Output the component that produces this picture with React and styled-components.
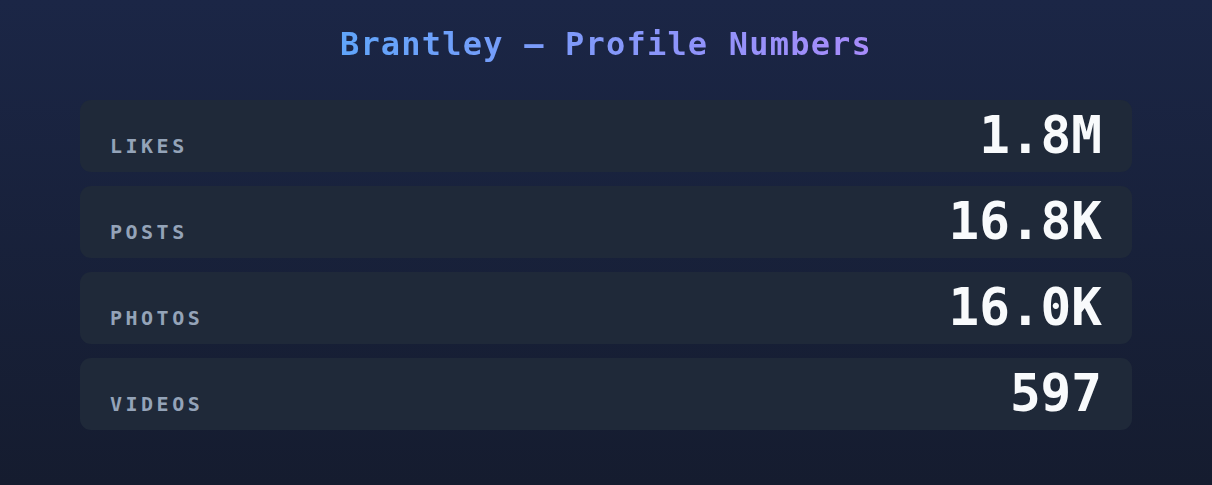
import styled, { createGlobalStyle } from "styled-components";

const GlobalStyle = createGlobalStyle`
  html, body {
    margin: 0;
    padding: 0;
    height: 100%;
  }
  body {
    background: linear-gradient(180deg, #1b2646 0%, #151c2f 100%);
    font-family: "DejaVu Sans Mono", "Liberation Mono", monospace;
    min-height: 485px;
  }
`;

const Page = styled.div`
  padding: 25px 80px;
  display: flex;
  flex-direction: column;
`;

const Title = styled.h1`
  margin: 0 0 37px;
  font-size: 32px;
  line-height: 38px;
  letter-spacing: 1.2px;
  font-weight: 700;
  text-align: center;
  background: linear-gradient(90deg, #60a5fa 0%, #a78bfa 100%);
  background-clip: text;
  -webkit-background-clip: text;
  color: transparent;
  width: fit-content;
  align-self: center;
`;

const List = styled.div`
  display: flex;
  flex-direction: column;
  gap: 14px;
`;

const Row = styled.div`
  display: flex;
  justify-content: space-between;
  align-items: baseline;
  height: 72px;
  box-sizing: border-box;
  padding: 10px 30px;
  background: #1f2939;
  border-radius: 11px;
`;

const Label = styled.span`
  font-size: 20px;
  font-weight: 700;
  letter-spacing: 3.5px;
  color: #94a3b8;
  text-transform: uppercase;
`;

const Value = styled.span`
  font-size: 51px;
  line-height: 1;
  font-weight: 700;
  color: #f8fafc;
`;

const stats = [
  { label: "Likes", value: "1.8M" },
  { label: "Posts", value: "16.8K" },
  { label: "Photos", value: "16.0K" },
  { label: "Videos", value: "597" },
];

const App = () => {
  return (
    <>
      <GlobalStyle />
      <Page>
        <Title>Brantley — Profile Numbers</Title>
        <List>
          {stats.map((s) => (
            <Row key={s.label}>
              <Label>{s.label}</Label>
              <Value>{s.value}</Value>
            </Row>
          ))}
        </List>
      </Page>
    </>
  );
};

export default App;
